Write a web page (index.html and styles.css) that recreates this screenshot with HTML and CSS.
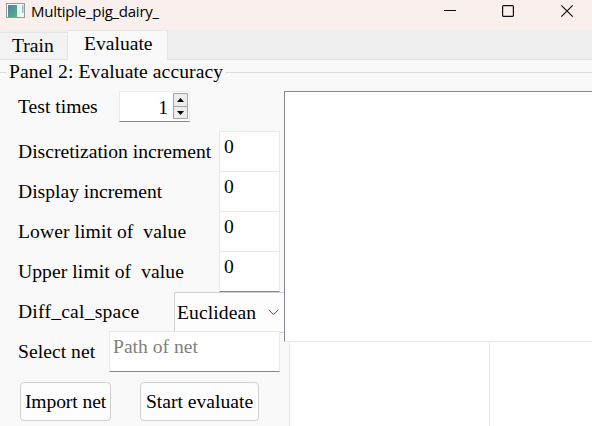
FILE: index.html
```html
<!DOCTYPE html>
<html lang="en">
<head>
<meta charset="utf-8">
<title>Multiple_pig_dairy_</title>
<link rel="stylesheet" href="styles.css">
</head>
<body>
<header class="titlebar">
  <svg class="app-icon" width="20" height="16" viewBox="0 0 20 16">
    <defs>
      <linearGradient id="screen" x1="0" y1="0" x2="1" y2="1">
        <stop offset="0" stop-color="#4a80ac"/><stop offset="1" stop-color="#57b77a"/>
      </linearGradient>
    </defs>
    <rect x=".5" y=".5" width="18" height="14" fill="#fbfdfc" stroke="#929a9e"/>
    <rect x="2" y="2" width="9" height="12" fill="url(#screen)"/>
    <rect x="11" y="2" width="4" height="12" fill="#edf3f2"/>
    <rect x="16" y="2" width="1.500" height="8" fill="#7fc5ac"/>
  </svg>
  <span class="title">Multiple_pig_dairy_</span>
  <svg class="controls" width="132" height="14" viewBox="0 0 132 14" fill="none" stroke="#111">
    <path d="M0 6.5h12" shape-rendering="crispEdges"/>
    <rect x="58.6" y="1.6" width="10.8" height="10.8" rx="1" stroke-width="1.2"/>
    <path d="M117.3 1.3l11.4 11.4M128.7 1.3l-11.4 11.4" stroke-width="1.2"/>
  </svg>
</header>
<nav class="tabs">
  <div class="tab">Train</div>
  <div class="tab active">Evaluate</div>
</nav>
<main class="panel">
  <div class="legend"><span>Panel 2: Evaluate accuracy</span></div>
  <div class="content">
    <form class="form">
      <div class="row times">
        <label class="w-times">Test times</label>
        <div class="spin"><span>1</span>
          <svg width="15" height="26" viewBox="0 0 15 26">
            <path d="M.5 .5h14v25h-14zM.5 13.5h14" fill="#ececec" stroke="#a5a5a5"/>
            <path d="M4 9h7L7.5 5zM4 18h7L7.5 22z" fill="#000"/>
          </svg>
        </div>
      </div>
      <div class="row"><label class="w-value">Discretization increment</label><div class="field">0</div></div>
      <div class="row"><label class="w-value">Display increment</label><div class="field">0</div></div>
      <div class="row"><label class="w-value spaced">Lower limit of &nbsp;value</label><div class="field">0</div></div>
      <div class="row"><label class="w-value spaced">Upper limit of &nbsp;value</label><div class="field last">0</div></div>
      <div class="row"><label class="w-combo">Diff_cal_space</label>
        <div class="combo"><span>Euclidean</span>
          <svg width="11" height="7" viewBox="0 0 11 7" fill="none" stroke="#555"><path d="M.7 .9l4.800 4.700L10.300 .9"/></svg>
        </div>
      </div>
      <div class="row path-row"><label class="w-path">Select net</label><div class="field last path">Path of net</div></div>
      <div class="buttons"><div class="button import">Import net</div><div class="button start">Start evaluate</div></div>
    </form>
    <section class="views">
      <div class="canvas"></div>
      <div class="plots"><div class="plot"></div><div class="plot wide"></div></div>
    </section>
  </div>
</main>
</body>
</html>
```
FILE: styles.css
```css
* { box-sizing: border-box; }
body {
  margin: 0;
  width: 592px;
  height: 426px;
  overflow: hidden;
  background: #f9f9f9;
  color: #000;
  font: 19.6px/24px "Liberation Serif", "Times New Roman", serif;
  white-space: nowrap;
}
svg { display: block; flex: none; }
.titlebar {
  display: flex;
  height: 30px;
  background: #f9f0ee;
}
.app-icon { margin: 3px 5px 0 6px; }
.title {
  width: 413px;
  font: 15px/23px "Open Sans", "Noto Sans", sans-serif;
  letter-spacing: -.26px;
}
.controls { margin-top: 4px; }
.tabs {
  display: flex;
  align-items: flex-end;
  height: 30px;
  background: #efefef;
  box-shadow: inset 0 -1px #e2e2e2;
}
.tab {
  width: 67px;
  height: 28px;
  padding-left: 12px;
  line-height: 26px;
  background: #f3f3f3;
  border-top: 1px solid #e5e5e5;
  border-bottom: 1px solid #e2e2e2;
}
.tab.active {
  width: 101px;
  height: 30px;
  padding-left: 16px;
  background: #f9f9f9;
  border: 1px solid #e5e5e5;
  border-bottom: 0;
}
.legend {
  display: flex;
  align-items: center;
  gap: 2px;
  height: 24px;
  letter-spacing: .1px;
}
.legend::before, .legend::after {
  content: "";
  width: 7px;
  height: 1px;
  background: #dcdcdc;
}
.legend::after { flex: 1; }
.content { display: flex; height: 342px; }
.form {
  flex: none;
  width: 284px;
  padding: 7px 0 0 18px;
}
.row { display: flex; height: 40px; }
.row label { flex: none; line-height: 41px; }
.row.times { height: 31px; margin-bottom: 9px; }
.row.times label { line-height: 31px; }
.row .w-times { width: 101px; }
.row .w-value { width: 201px; }
.row .spaced { letter-spacing: .08px; }
.row .w-combo { width: 156px; letter-spacing: .22px; }
.row .w-path { width: 91px; letter-spacing: .05px; }
.spin {
  display: flex;
  justify-content: flex-end;
  gap: 5px;
  width: 71px;
  padding: 1px 1px 0 0;
  line-height: 29px;
  background: #fff;
  border: 1px solid #ececec;
  border-bottom-color: #868686;
}
.field {
  width: 61px;
  padding: 3px 0 0 4px;
  background: #fff;
  border: 1px solid #e9e9e9;
  border-bottom: 0;
}
.field.last { height: 41px; border-bottom: 1px solid #868686; }
.combo {
  display: flex;
  align-items: center;
  justify-content: space-between;
  width: 110px;
  height: 41px;
  margin-top: 1px;
  padding: 0 5px 0 2px;
  letter-spacing: .1px;
  background: #fdfdfd;
  border: 1px solid #d0d0d0;
  border-right: 0;
  border-radius: 2px 0 0;
}
.path-row { position: relative; }
.field.path { width: 171px; padding-left: 3px; color: #808080; }
.buttons { display: flex; gap: 29px; padding: 11px 0 0 2px; }
.button {
  height: 39px;
  text-align: center;
  line-height: 38px;
  background: #fdfdfd;
  border: 1px solid #d0d0d0;
  border-radius: 4px;
}
.import { width: 91px; letter-spacing: -.1px; }
.start { width: 119px; }
.views { flex: 1; min-width: 0; padding-top: 7px; }
.canvas {
  height: 251px;
  background: #fff;
  border: 1px solid #828790;
  border-right: 0;
  border-bottom-color: #e9e9e9;
}
.plots { display: flex; height: 84px; margin-left: 5px; }
.plot {
  width: 200px;
  background: #fff;
  border-left: 1px solid #e9e9e9;
}
.plot.wide { flex: 1; }
```
